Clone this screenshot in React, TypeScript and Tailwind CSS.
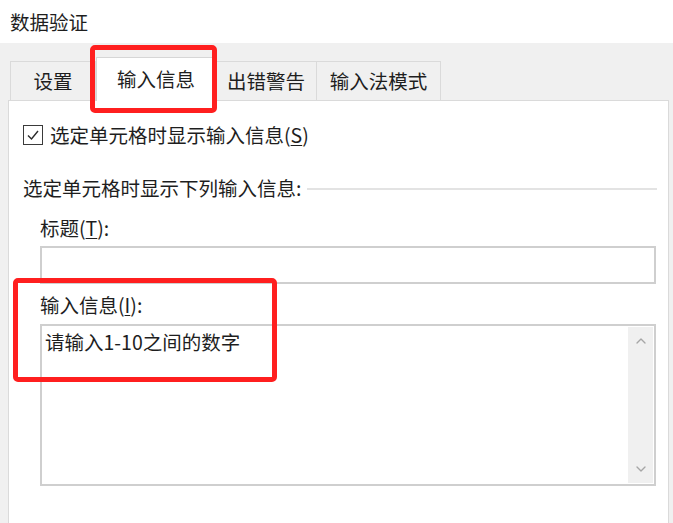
import { ChevronUp, ChevronDown } from "lucide-react";

const TABS = [
  { label: "设置", w: "w-[86px]", active: false },
  { label: "输入信息", w: "w-[120px]", active: true },
  { label: "出错警告", w: "w-[102px]", active: false },
  { label: "输入法模式", w: "w-[125px]", active: false },
];

export default function App() {
  return (
    <div className="relative w-[673px] h-[523px] overflow-hidden bg-[#f0f0f0] text-[#1e1e1e] font-['Noto_Sans_CJK_SC','Noto_Sans',sans-serif] text-[19.5px] leading-[24px]">
      {/* title bar */}
      <div className="h-[43px] bg-white pl-[10px] flex items-center">数据验证</div>

      {/* tab strip */}
      <div className="flex items-end h-[57px] pl-[10px]">
        {TABS.map((t) =>
          t.active ? (
            <div
              key={t.label}
              className={`${t.w} h-[44px] -mb-px relative z-10 bg-white border border-b-0 border-[#d6d6d6] flex items-center justify-center pb-[2px]`}
            >
              {t.label}
            </div>
          ) : (
            <div
              key={t.label}
              className={`${t.w} h-[39px] bg-[#f0f0f0] border border-b-0 border-[#dadada] -ml-px first:ml-0 flex items-center justify-center`}
            >
              {t.label}
            </div>
          )
        )}
      </div>

      {/* panel */}
      <div className="ml-[8px] w-[661px] h-[440px] bg-white border border-[#dadada] pl-[14px] pr-[11px]">
        <div className="mt-[24px] flex items-center h-[20px]">
          <div className="w-[20px] h-[20px] border-[1.5px] border-[#3a3a3a] flex items-center justify-center">
            <svg width="14" height="14" viewBox="0 0 14 14" fill="none">
              <path d="M2 7.5 L5.5 11 L12 3" stroke="#2a2a2a" strokeWidth="1.4" />
            </svg>
          </div>
          <span className="ml-[7px]">
            选定单元格时显示输入信息(<span className="underline underline-offset-2">S</span>)
          </span>
        </div>

        <div className="mt-[31px] flex items-center">
          <span>选定单元格时显示下列输入信息:</span>
          <div className="flex-1 ml-[6px] h-[2px] bg-[#e3e3e3] mt-[2px]" />
        </div>

        <div className="pl-[17px] pr-[1px]">
          <div className="mt-[16px]">
            标题(<span className="underline underline-offset-2">T</span>):
          </div>
          <div className="mt-[6px] h-[38px] border-2 border-[#cfcfcf] bg-white" />

          <div className="mt-[9px]">
            输入信息(<span className="underline underline-offset-2">I</span>):
          </div>
          <div className="mt-[7px] h-[162px] border-2 border-[#cfcfcf] bg-white flex">
            <div className="flex-1 pl-[3px] pt-[4px]">请输入1-10之间的数字</div>
            <div className="w-[25px] my-[1px] mr-[1px] bg-[#f0f0f0] flex flex-col items-center justify-between py-[6px] text-[#a6a6a6]">
              <ChevronUp size={16} strokeWidth={2} />
              <ChevronDown size={16} strokeWidth={2} />
            </div>
          </div>
        </div>
      </div>

      {/* annotation boxes */}
      <div className="absolute left-[90px] top-[45px] w-[127px] h-[68px] border-[5px] border-[#ff1f1f] rounded-[5px] z-20" />
      <div className="absolute left-[13px] top-[278px] w-[264px] h-[104px] border-[5px] border-[#ff1f1f] rounded-[5px] z-20" />
    </div>
  );
}
